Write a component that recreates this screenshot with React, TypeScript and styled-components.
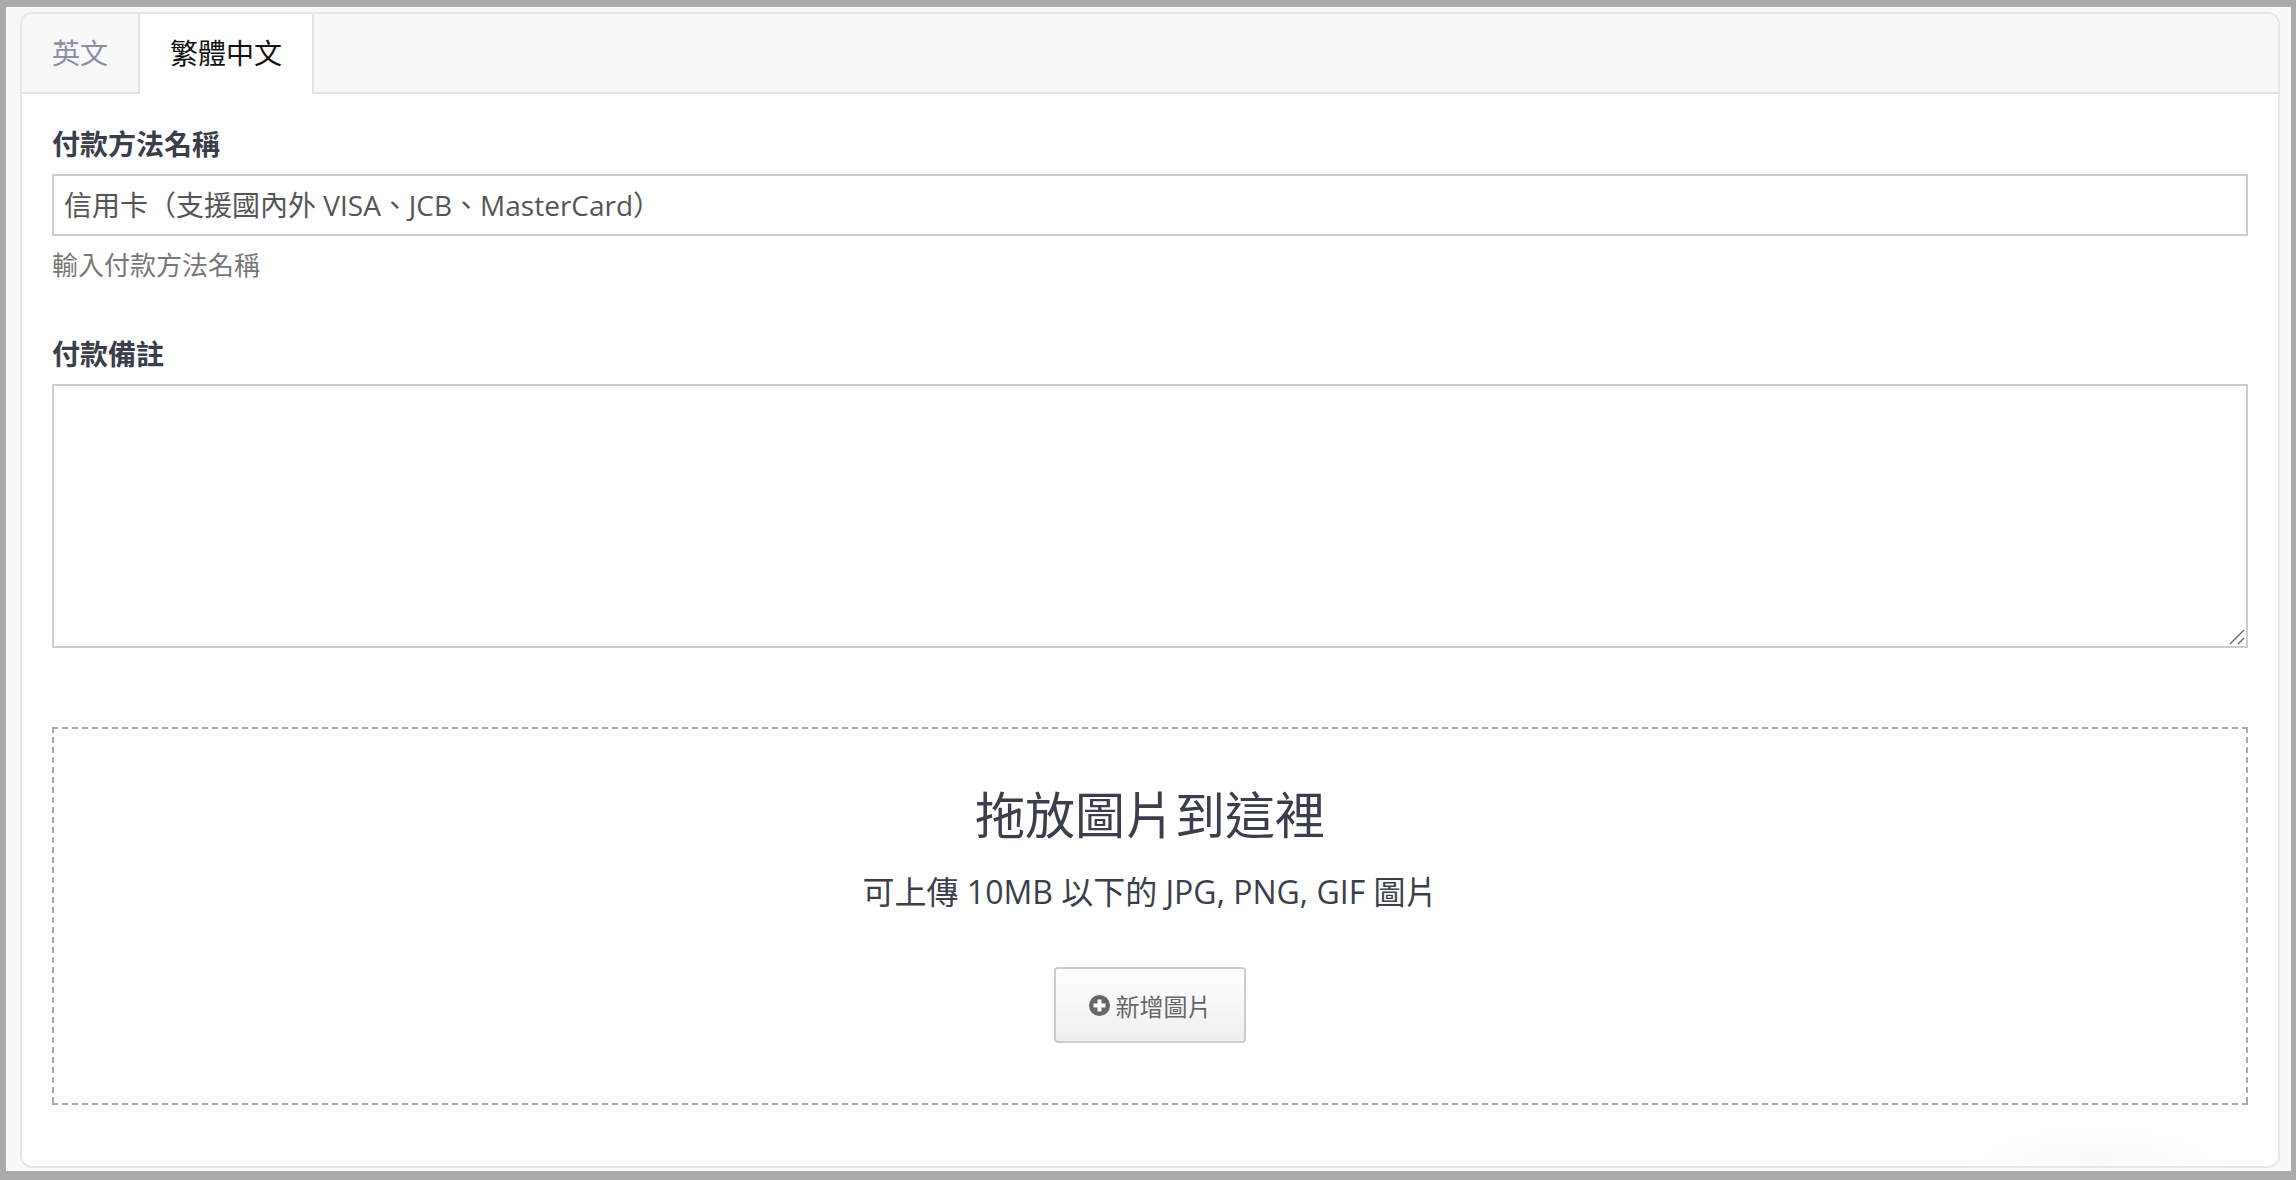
import * as React from 'react'
import styled, { createGlobalStyle } from 'styled-components'

const FONT = `"Open Sans", "Noto Sans CJK TC", sans-serif`

const GlobalStyle = createGlobalStyle`
  html, body {
    margin: 0;
    padding: 0;
    background: #aaaaaa;
  }
  * {
    box-sizing: border-box;
  }
`

const Frame = styled.div`
  width: 2296px;
  height: 1180px;
  padding: 7px 5px 9px 6px;
  font-family: ${FONT};
`

const Backdrop = styled.div`
  height: 100%;
  background: #f8f8f8;
  padding: 5px 11px 3px 14px;
`

const Card = styled.div`
  height: 100%;
  background: radial-gradient(ellipse 150px 50px at 92% 100%, #fafafa 0%, #ffffff 100%);
  border: 2px solid #e7e7e7;
  border-radius: 12px;
  overflow: hidden;
`

const TabBar = styled.div`
  display: flex;
  height: 80px;
  background: #f8f8f8;
  border-bottom: 2px solid #e2e2e2;
`

const Tab = styled.div<{ $active?: boolean }>`
  height: 80px;
  padding: 0 30px;
  border-right: 2px solid #e2e2e2;
  background: ${p => (p.$active ? '#ffffff' : 'transparent')};
  color: ${p => (p.$active ? '#111111' : '#8b90a0')};
  font-size: 28px;
  line-height: 79px;
`

const Body = styled.div`
  padding: 30px 30px 0 30px;
`

const Group = styled.div`
  margin-bottom: 10px;
`

const Label = styled.label`
  display: block;
  height: 40px;
  margin-bottom: 10px;
  color: #3a3f4b;
  font-size: 28px;
  font-weight: 700;
  line-height: 40px;
`

const TextInput = styled.input`
  display: block;
  width: 100%;
  height: 62px;
  padding: 0 10px 2px;
  border: 2px solid #cccccc;
  border-radius: 0;
  outline: none;
  color: #555555;
  font-family: ${FONT};
  font-size: 28px;
`

const Help = styled.div`
  height: 40px;
  margin-top: 9px;
  margin-bottom: 49px;
  color: #777777;
  font-size: 26px;
  line-height: 40px;
`

const AreaWrap = styled.div`
  position: relative;
`

const TextArea = styled.textarea`
  display: block;
  width: 100%;
  height: 264px;
  padding: 10px;
  border: 2px solid #cccccc;
  border-radius: 0;
  outline: none;
  resize: none;
  font-family: ${FONT};
  font-size: 28px;
`

const Grip = styled.svg`
  position: absolute;
  right: 3px;
  bottom: 3px;
`

const DropZone = styled.div`
  display: flex;
  flex-direction: column;
  align-items: center;
  height: 378px;
  margin-top: 79px;
  padding-top: 53px;
  color: #3a3f4b;
  background:
    repeating-linear-gradient(to right, #aaaaaa 0 6px, transparent 6px 10px) top left / 100% 2px no-repeat,
    repeating-linear-gradient(to right, #aaaaaa 0 6px, transparent 6px 10px) bottom left / 100% 2px no-repeat,
    repeating-linear-gradient(to bottom, #aaaaaa 0 6px, transparent 6px 10px) top left / 2px 100% no-repeat,
    repeating-linear-gradient(to bottom, #aaaaaa 0 6px, transparent 6px 10px) top right / 2px 100% no-repeat;
`

const DropTitle = styled.div`
  height: 70px;
  font-size: 50px;
  line-height: 70px;
`

const DropHint = styled.div`
  height: 44px;
  margin-top: 20px;
  font-size: 32px;
  line-height: 44px;
`

const AddButton = styled.button`
  display: flex;
  align-items: center;
  justify-content: center;
  gap: 6px;
  width: 192px;
  height: 76px;
  margin-top: 53px;
  padding: 0;
  border: 2px solid #cccccc;
  border-radius: 4px;
  background: linear-gradient(to bottom, #ffffff, #efefef);
  color: #666666;
  font-family: ${FONT};
  font-size: 24px;
`

const PlusIcon = () => (
  <svg width="21" height="21" viewBox="0 0 21 21">
    <circle cx="10.5" cy="10.5" r="10.5" fill="#666666" />
    <rect x="4.5" y="8.5" width="12" height="4" fill="#ffffff" />
    <rect x="8.5" y="4.5" width="4" height="12" fill="#ffffff" />
  </svg>
)

const App = () => (
  <Frame>
    <GlobalStyle />
    <Backdrop>
      <Card>
        <TabBar>
          <Tab>英文</Tab>
          <Tab $active>繁體中文</Tab>
        </TabBar>
        <Body>
          <Group>
            <Label>付款方法名稱</Label>
            <TextInput defaultValue="信用卡（支援國內外 VISA、JCB、MasterCard）" />
            <Help>輸入付款方法名稱</Help>
          </Group>
          <Group>
            <Label>付款備註</Label>
            <AreaWrap>
              <TextArea />
              <Grip width="16" height="16" viewBox="0 0 16 16">
                <path d="M1 15L15 1M9 15L15 9" stroke="#666666" strokeWidth="1.4" fill="none" />
              </Grip>
            </AreaWrap>
          </Group>
          <DropZone>
            <DropTitle>拖放圖片到這裡</DropTitle>
            <DropHint>可上傳 10MB 以下的 JPG, PNG, GIF 圖片</DropHint>
            <AddButton><PlusIcon />新增圖片</AddButton>
          </DropZone>
        </Body>
      </Card>
    </Backdrop>
  </Frame>
)

export default App
